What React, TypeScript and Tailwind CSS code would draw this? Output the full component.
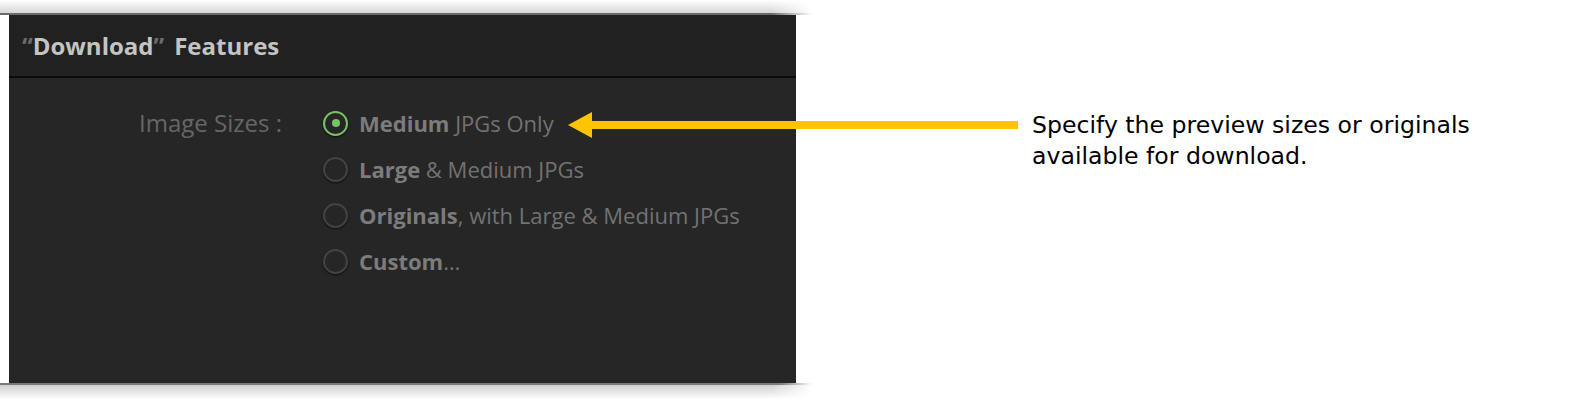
const options = [
  { bold: "Medium", rest: " JPGs Only", checked: true },
  { bold: "Large", rest: " & Medium JPGs", checked: false },
  { bold: "Originals", rest: ", with Large & Medium JPGs", checked: false },
  { bold: "Custom", rest: "…", checked: false },
]

function Radio({ checked }: { checked: boolean }) {
  if (checked) {
    return (
      <span className="flex h-[25px] w-[25px] shrink-0 items-center justify-center rounded-full border-[2.5px] border-[#78c266] shadow-[0_1px_2px_rgba(0,0,0,0.7)]">
        <span className="h-[8px] w-[8px] rounded-full bg-[#78c266]" />
      </span>
    )
  }
  return (
    <span className="h-[25px] w-[25px] shrink-0 rounded-full border-[2.5px] border-[#434343] shadow-[0_1px_2px_rgba(0,0,0,0.7)]" />
  )
}

export default function App() {
  return (
    <div className="relative h-[402px] w-[1580px] overflow-hidden bg-white">
      <div className="flex">
        {/* panel with its window shadow */}
        <div className="w-[812px] shrink-0">
          <div className="h-[13px] bg-gradient-to-b from-white to-[#d6d6d6] [mask-image:linear-gradient(to_right,black_95%,transparent)]" />
          <div className="h-[2px] bg-[#6a6a6a] [mask-image:linear-gradient(to_right,black_95%,transparent)]" />
          <div
            className="ml-[9px] flex h-[368px] w-[787px] flex-col bg-[#262626]"
            style={{ fontFamily: '"Open Sans", sans-serif' }}
          >
            <div className="flex h-[61px] items-center bg-[#212121] pl-[13px] text-[24px] font-bold text-[#c4c4c4]">
              <span className="text-[#6c6c6c]">“</span>
              <span>Download</span>
              <span className="text-[#6c6c6c]">”</span>
              <span className="ml-[10px]">Features</span>
            </div>
            <div className="h-[2px] bg-[#0b0b0b]" />
            <div className="flex pt-[30px]">
              <div className="w-[273px] shrink-0 text-right text-[24px] leading-[30px] text-[#666666]">
                Image Sizes :
              </div>
              <div className="ml-[41px] flex flex-col gap-[16px]">
                {options.map((o) => (
                  <div key={o.bold} className="flex h-[30px] items-center gap-[11px] text-[22px] leading-[30px]">
                    <Radio checked={o.checked} />
                    <span className="text-[#727272]">
                      <b className="font-bold text-[#7c7c7c]">{o.bold}</b>
                      {o.rest}
                    </span>
                  </div>
                ))}
              </div>
            </div>
          </div>
          <div className="h-[2px] bg-[#7a7a7a] [mask-image:linear-gradient(to_right,black_96%,transparent)]" />
          <div className="h-[14px] bg-gradient-to-b from-[#cfcfcf] to-white [mask-image:linear-gradient(to_right,black_95%,transparent)]" />
        </div>

        <div
          className="ml-[220px] pt-[110px] text-[23.6px] leading-[31px] text-black"
          style={{ fontFamily: '"DejaVu Sans", Verdana, sans-serif' }}
        >
          Specify the preview sizes or originals
          <br />
          available for download.
        </div>
      </div>

      {/* annotation arrow */}
      <svg className="absolute left-[566px] top-[111px]" width="452" height="28" viewBox="0 0 452 28">
        <polygon points="2,14 26,1 26,27" fill="#ffc400" />
        <rect x="24" y="10" width="428" height="8" fill="#ffc400" />
      </svg>
    </div>
  )
}
